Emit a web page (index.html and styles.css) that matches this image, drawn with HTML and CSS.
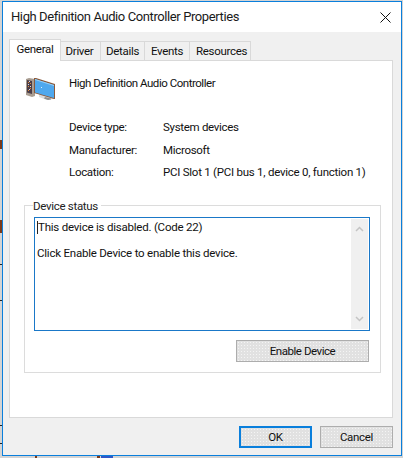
FILE: index.html
```html
<!DOCTYPE html>
<html lang="en">
<head>
<meta charset="utf-8">
<title>High Definition Audio Controller Properties</title>
<link rel="stylesheet" href="styles.css">
</head>
<body>
<div class="dialog">
  <header class="titlebar">
    <span class="title">High Definition Audio Controller Properties</span>
    <svg class="close" width="11" height="11" viewBox="0 0 11 11"><path d="M.5.5l10 10M10.500.5l-10 10" stroke="#111" stroke-width="1" fill="none"/></svg>
  </header>
  <div class="body">
    <nav class="tabs">
      <span class="tab active">General</span>
      <span class="tab w-driver">Driver</span>
      <span class="tab w-details">Details</span>
      <span class="tab w-events">Events</span>
      <span class="tab w-resources">Resources</span>
    </nav>
    <section class="panel">
      <div class="device">
        <svg class="device-icon" width="30" height="22" viewBox="0 0 30 22">
          <path d="M0 1l3-1 6 1v17l-3 1-6-2z" fill="#a89c90"/>
          <path d="M1 2l5 1v13l-5-1.500z" fill="#4a3c46"/>
          <path d="M2 4h1v1H2zM4 5h1v1H4zM2 8h1v1H2zM4 10h1v1H4zM2 12h1v1H2z" fill="#e08a3c"/>
          <path d="M3 3h1v1H3zM2 6h1v1H2zM4 8h1v1H4zM3 11h1v1H3z" fill="#d9d9e8"/>
          <path d="M13 16l7 2 7 2v1l-6 1-8-3z" fill="#dcdcdc"/>
          <path d="M19 19l6 1.500v1l-3 .5-4-1.500z" fill="#8d8d8d"/>
          <path d="M8 0h2l19 6v15h-1L8 15z" fill="#8a5a3c"/>
          <path d="M9 1l19 6v13L9 14.500z" fill="#4fa8ee"/>
          <path d="M9 1l19 6v1L9 2z" fill="#9bd0f7"/>
          <path d="M15 9h1v1h-1z" fill="#d8f0ff"/>
        </svg>
        <span class="device-name">High Definition Audio Controller</span>
      </div>
      <dl class="props">
        <dt>Device type:</dt><dd>System devices</dd>
        <dt>Manufacturer:</dt><dd>Microsoft</dd>
        <dt>Location:</dt><dd class="loc">PCI Slot 1 (PCI bus 1, device 0, function 1)</dd>
      </dl>
      <fieldset class="status">
        <legend>Device status</legend>
        <div class="statusbox">
          <div class="statustext">
            <p><span class="caret"></span>This device is disabled. (Code 22)</p>
            <p>Click Enable Device to enable this device.</p>
          </div>
          <div class="scrollbar">
            <svg width="9" height="6" viewBox="0 0 9 6"><path d="M1 5l3.500-3.500L8 5" stroke="#c4c4c4" stroke-width="1.500" fill="none"/></svg>
            <svg width="9" height="6" viewBox="0 0 9 6"><path d="M1 1l3.500 3.500L8 1" stroke="#c4c4c4" stroke-width="1.500" fill="none"/></svg>
          </div>
        </div>
        <div class="status-actions"><span class="btn enable">Enable Device</span></div>
      </fieldset>
    </section>
    <footer class="actions">
      <span class="btn default">OK</span>
      <span class="btn">Cancel</span>
    </footer>
  </div>
</div>
<div class="behind">
  <span class="frag frag-a"></span>
  <span class="frag frag-b"></span>
  <span class="frag frag-c"></span>
  <span class="frag-text">Legacy device</span>
</div>
</body>
</html>
```

FILE: styles.css
```css
* { box-sizing: border-box; }
html, body { margin: 0; padding: 0; }
body {
  width: 403px;
  height: 458px;
  overflow: hidden;
  padding: 1px 1px 0 2px;
  font: 11.500px/16px Roboto, "Noto Sans", sans-serif;
  letter-spacing: -0.3px;
  color: #111;
  background:
    linear-gradient(#7a3a1a, #7a3a1a) 0 140px / 2px 9px no-repeat,
    linear-gradient(#7a3a1a, #7a3a1a) 0 220px / 2px 13px no-repeat,
    linear-gradient(#222, #222) 0 264px / 2px 1px no-repeat,
    linear-gradient(#222, #222) 0 300px / 2px 1px no-repeat,
    linear-gradient(#222, #222) 0 425px / 2px 1px no-repeat,
    linear-gradient(#222, #222) 0 443px / 2px 1px no-repeat,
    #d4d4d4;
}
.dialog {
  width: 400px;
  height: 455px;
  border: 1px solid #0a7fdc;
  display: flex;
  flex-direction: column;
  background: #f0f0f0;
}
.titlebar {
  height: 30px;
  flex: none;
  background: #fff;
  display: flex;
  align-items: center;
  justify-content: space-between;
  padding: 0 10px 0 8px;
}
.title { font-size: 13px; letter-spacing: -0.4px; color: #1a1a1a; }
.close { display: block; }
.body {
  flex: 1;
  display: flex;
  flex-direction: column;
  padding: 7px 8px 0 6px;
}
.tabs { display: flex; align-items: flex-end; height: 21px; position: relative; z-index: 1; }
.tab {
  width: 44px;
  height: 19px;
  margin-left: -1px;
  border: 1px solid #d9d9d9;
  border-bottom: 0;
  background: #f0f0f0;
  display: flex;
  align-items: center;
  justify-content: center;
}
.tab.active {
  width: 52px;
  margin-left: 0;
  background: #fff;
  padding-bottom: 3px;
  margin-bottom: -1px;
  height: 22px;
  position: relative;
  z-index: 1;
}
.w-driver { width: 41px; padding-right: 2px; }
.w-details { width: 45px; }
.w-events { width: 46px; }
.w-resources { width: 62px; padding-left: 3px; }
.panel {
  width: 384px;
  height: 358px;
  background: #fff;
  border: 1px solid #d9d9d9;
  padding: 10px 11px 0 14px;
}
.device {
  display: flex;
  align-items: center;
  gap: 13px;
  padding-left: 2px;
  height: 24px;
}
.device-name { letter-spacing: -0.47px; }
.device-icon { display: block; margin-top: 10px; margin-bottom: -1px; flex: none; }
.props {
  margin: 21px 0 0 45px;
  display: grid;
  grid-template-columns: 94px 1fr;
  grid-auto-rows: 22.500px;
  align-items: center;
}
.props dt, .props dd { margin: 0; white-space: nowrap; }
.props .loc { letter-spacing: -0.25px; }
.status {
  margin: 14px 0 0 0;
  padding: 0 10px 0 9px;
  width: 357px;
  height: 175px;
  border: 1px solid #dcdcdc;
  min-width: 0;
}
.status legend { padding: 0 3px 0 0; margin-left: -1px; line-height: 16px; color: #222; }
.statusbox {
  height: 114px;
  margin-top: 3px;
  border: 1px solid #1a78c8;
  display: flex;
  padding: 1px;
  background: #fff;
}
.statustext { flex: 1; padding: 2px 0 0 1px; line-height: 13px; letter-spacing: -0.22px; }
.statustext p { margin: 0 0 13px; }
.caret {
  display: inline-block;
  width: 1px;
  height: 13px;
  background: #222;
  vertical-align: -3px;
}
.scrollbar {
  width: 17px;
  background: #f0f0f0;
  display: flex;
  flex-direction: column;
  justify-content: space-between;
  align-items: center;
  padding: 7px 0;
}
.scrollbar svg { display: block; }
.status-actions { display: flex; justify-content: flex-end; margin-top: 9px; padding-right: 1px; }
.btn {
  width: 73px;
  height: 22px;
  border: 1px solid #adadad;
  background-color: #e1e1e1;
  background-image: radial-gradient(circle, #f4f4f4 0.6px, transparent 0.8px);
  background-size: 3px 3px;
  display: flex;
  align-items: center;
  justify-content: center;
}
.btn.enable { width: 133px; letter-spacing: -0.45px; }
.btn.default { border: 2px solid #0a7fdc; }
.actions {
  display: flex;
  justify-content: flex-end;
  gap: 8px;
  margin-top: 8px;
}
.behind {
  display: flex;
  align-items: flex-start;
  height: 2px;
  overflow: hidden;
  padding-left: 30px;
  line-height: 12px;
}
.frag { height: 2px; display: block; flex: none; }
.frag-a { width: 2px; background: #7a3a1a; margin-left: 3px; }
.frag-b { width: 3px; background: #7a3a1a; margin-left: 60px; }
.frag-c { width: 12px; background: #2f58c8; margin-left: 1px; }
.frag-text { margin-left: 8px; color: #222; }
```
